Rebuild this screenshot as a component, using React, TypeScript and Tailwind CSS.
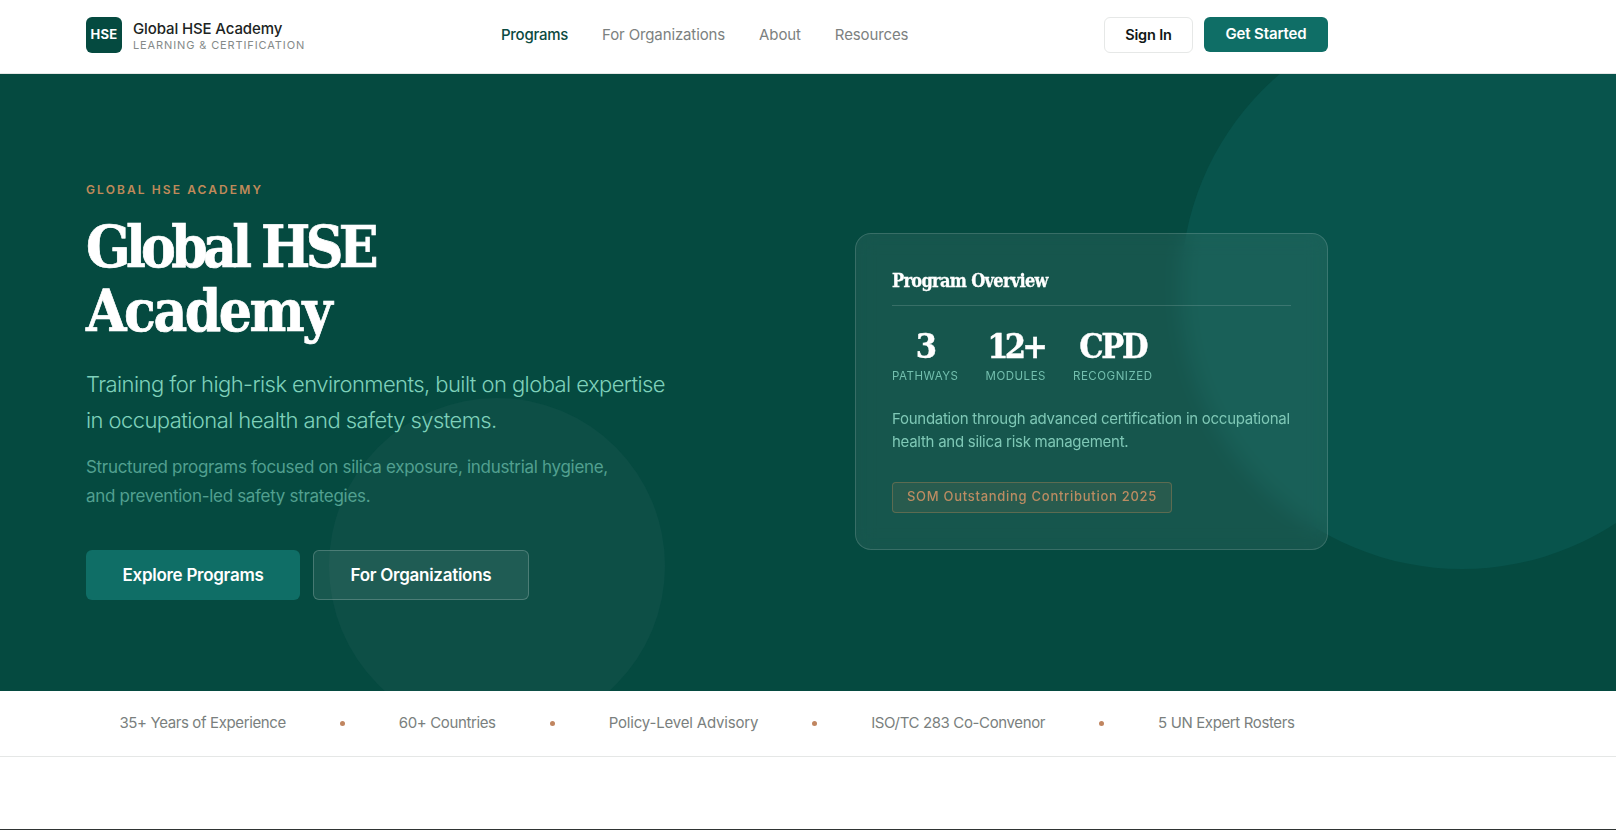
import React from "react";

const sans = "font-['Inter','Noto_Sans',sans-serif]";
const slab = "font-['DejaVu_Serif_Condensed','DejaVu_Serif',serif]";

const navLinks = [
  { label: "Programs", active: true },
  { label: "For Organizations", active: false },
  { label: "About", active: false },
  { label: "Resources", active: false },
];

const stats = [
  { value: "3", label: "Pathways", tracking: "tracking-[-0.06em]" },
  { value: "12+", label: "Modules", tracking: "tracking-[-0.11em]" },
  { value: "CPD", label: "Recognized", tracking: "tracking-[-0.07em]" },
];

const trustItems = [
  { label: "35+ Years of Experience", tracking: "" },
  { label: "60+ Countries", tracking: "" },
  { label: "Policy-Level Advisory", tracking: "tracking-[-0.012em]" },
  { label: "ISO/TC 283 Co-Convenor", tracking: "" },
  { label: "5 UN Expert Rosters", tracking: "" },
];

function Header() {
  return (
    <header className="h-[74px] pb-[3px] bg-white border-b border-[#e5e7e6]">
      <div className="ml-[86px] w-[1242px] h-full flex items-center justify-between">
        {/* Logo */}
        <div className="flex items-center gap-[11px] w-[415px]">
          <div className="w-9 h-9 rounded-md bg-[#054a40] flex items-center justify-center text-white text-[13px] font-bold tracking-[0.02em]">
            HSE
          </div>
          <div>
            <div className="text-[15px] leading-[19px] font-medium text-[#1c2423] tracking-[-0.008em]">Global HSE Academy</div>
            <div className="text-[11px] leading-[14px] text-[#858a89] uppercase tracking-[0.08em]">Learning &amp; Certification</div>
          </div>
        </div>

        {/* Nav */}
        <nav className="flex items-center gap-[34px] text-[15px] tracking-[-0.008em] mr-auto">
          {navLinks.map((link) => (
            <a key={link.label} className={link.active ? "text-[#0b4a41] font-medium tracking-[-0.018em]" : "text-[#7c8180]"}>
              {link.label}
            </a>
          ))}
        </nav>

        <div className="flex items-center gap-[11px] mb-px">
          <button className="w-[89px] h-[36px] rounded-md border border-[#e6e8e7] bg-white text-[14.5px] font-semibold text-[#111716] tracking-[-0.01em]">
            Sign In
          </button>
          <button className="w-[124px] h-[35px] rounded-md bg-[#0f6e66] text-[15px] font-semibold text-white tracking-[-0.008em]">
            Get Started
          </button>
        </div>
      </div>
    </header>
  );
}

function OverviewCard() {
  return (
    <div className="relative w-[473px] h-[317px] rounded-2xl border border-white/15 bg-white/[0.07] backdrop-blur-[10px] pt-[34px] px-9">
      <h3 className={`${slab} text-[18px] leading-[26px] font-bold text-white tracking-[-0.038em] [-webkit-text-stroke:0.3px_#fff] pb-[11px] border-b border-white/15`}>
        Program Overview
      </h3>
      <div className="flex gap-[27px] mt-[18px]">
        {stats.map((s) => (
          <div key={s.label} className="flex flex-col items-center">
            <div className={`${slab} ${s.tracking} text-[34px] leading-[44px] font-bold text-white [-webkit-text-stroke:0.4px_#fff]`}>{s.value}</div>
            <div className="text-[11.5px] leading-[14px] mt-[1px] text-[#73bfae] uppercase tracking-[0.045em]">{s.label}</div>
          </div>
        ))}
      </div>
      <p className="mt-[24px] text-[15px] leading-[23px] text-[#7fc8b6] tracking-[-0.018em]">
        Foundation through advanced certification in occupational health and silica risk management.
      </p>
      <div className="mt-[29px] inline-flex items-center h-[31px] px-[14px] rounded border border-[#c08a5a]/35 bg-[#c08a5a]/10 text-[13px] font-medium text-[#bc8c62] tracking-[0.055em]">
        SOM Outstanding Contribution 2025
      </div>
    </div>
  );
}

function Hero() {
  return (
    <section className="relative h-[617px] bg-[#054a40] overflow-hidden">
      <div className="absolute left-[1181px] top-[-67px] w-[562px] h-[562px] rounded-full bg-[#08544c]" />
      <div className="absolute left-[329px] top-[324px] w-[336px] h-[336px] rounded-full bg-[#0d4f46]" />

      <div className="relative ml-[86px] w-[1242px] flex items-center justify-between pt-[108px]">
        <div className="w-[600px]">
          <div className="text-[12px] leading-4 font-semibold text-[#c08a5a] uppercase tracking-[0.175em]">Global HSE Academy</div>
          <h1 className={`${slab} mt-[17px] text-[58px] leading-[64px] font-bold text-white [-webkit-text-stroke:0.7px_#fff]`}>
            <span className="tracking-[-0.08em]">Global HSE</span>
            <br />
            <span className="tracking-[-0.042em]">Academy</span>
          </h1>
          <p className="mt-[23px] text-[22px] leading-[36px] font-light text-[#7fd1bb] whitespace-nowrap tracking-[-0.026em]">
            Training for high-risk environments, built on global expertise
            <br />
            in occupational health and safety systems.
          </p>
          <p className="mt-[15px] text-[17px] leading-[29px] text-[#52a090] whitespace-nowrap tracking-[-0.018em]">
            Structured programs focused on silica exposure, industrial hygiene,
            <br />
            and prevention-led safety strategies.
          </p>
          <div className="flex gap-[13px] mt-[39px]">
            <button className="w-[214px] h-[50px] pt-px rounded-md bg-[#0f6e66] text-[17px] font-semibold text-white tracking-[-0.016em]">
              Explore Programs
            </button>
            <button className="w-[216px] h-[50px] pt-px rounded-md border border-white/20 bg-white/[0.08] text-[17px] font-semibold text-white tracking-[-0.016em]">
              For Organizations
            </button>
          </div>
        </div>
        <OverviewCard />
      </div>
    </section>
  );
}

function TrustBar() {
  return (
    <div className="h-[66px] bg-white border-b border-[#e5e7e6]">
      <div className="ml-[86px] w-[1242px] h-full flex items-center justify-center gap-[54px] text-[15px] text-[#7a7f7e] tracking-[-0.025em]">
        {trustItems.map((item, idx) => (
          <React.Fragment key={item.label}>
            {idx > 0 && <span className="w-[5px] h-[5px] rounded-full bg-[#c08560]" />}
            <span className={item.tracking}>{item.label}</span>
          </React.Fragment>
        ))}
      </div>
    </div>
  );
}

export default function App() {
  return (
    <div className={`${sans} h-[830px] overflow-hidden bg-white flex flex-col`}>
      <Header />
      <Hero />
      <TrustBar />
      <div className="flex-1" />
      <div className="h-px bg-[#2f3433]" />
    </div>
  );
}
